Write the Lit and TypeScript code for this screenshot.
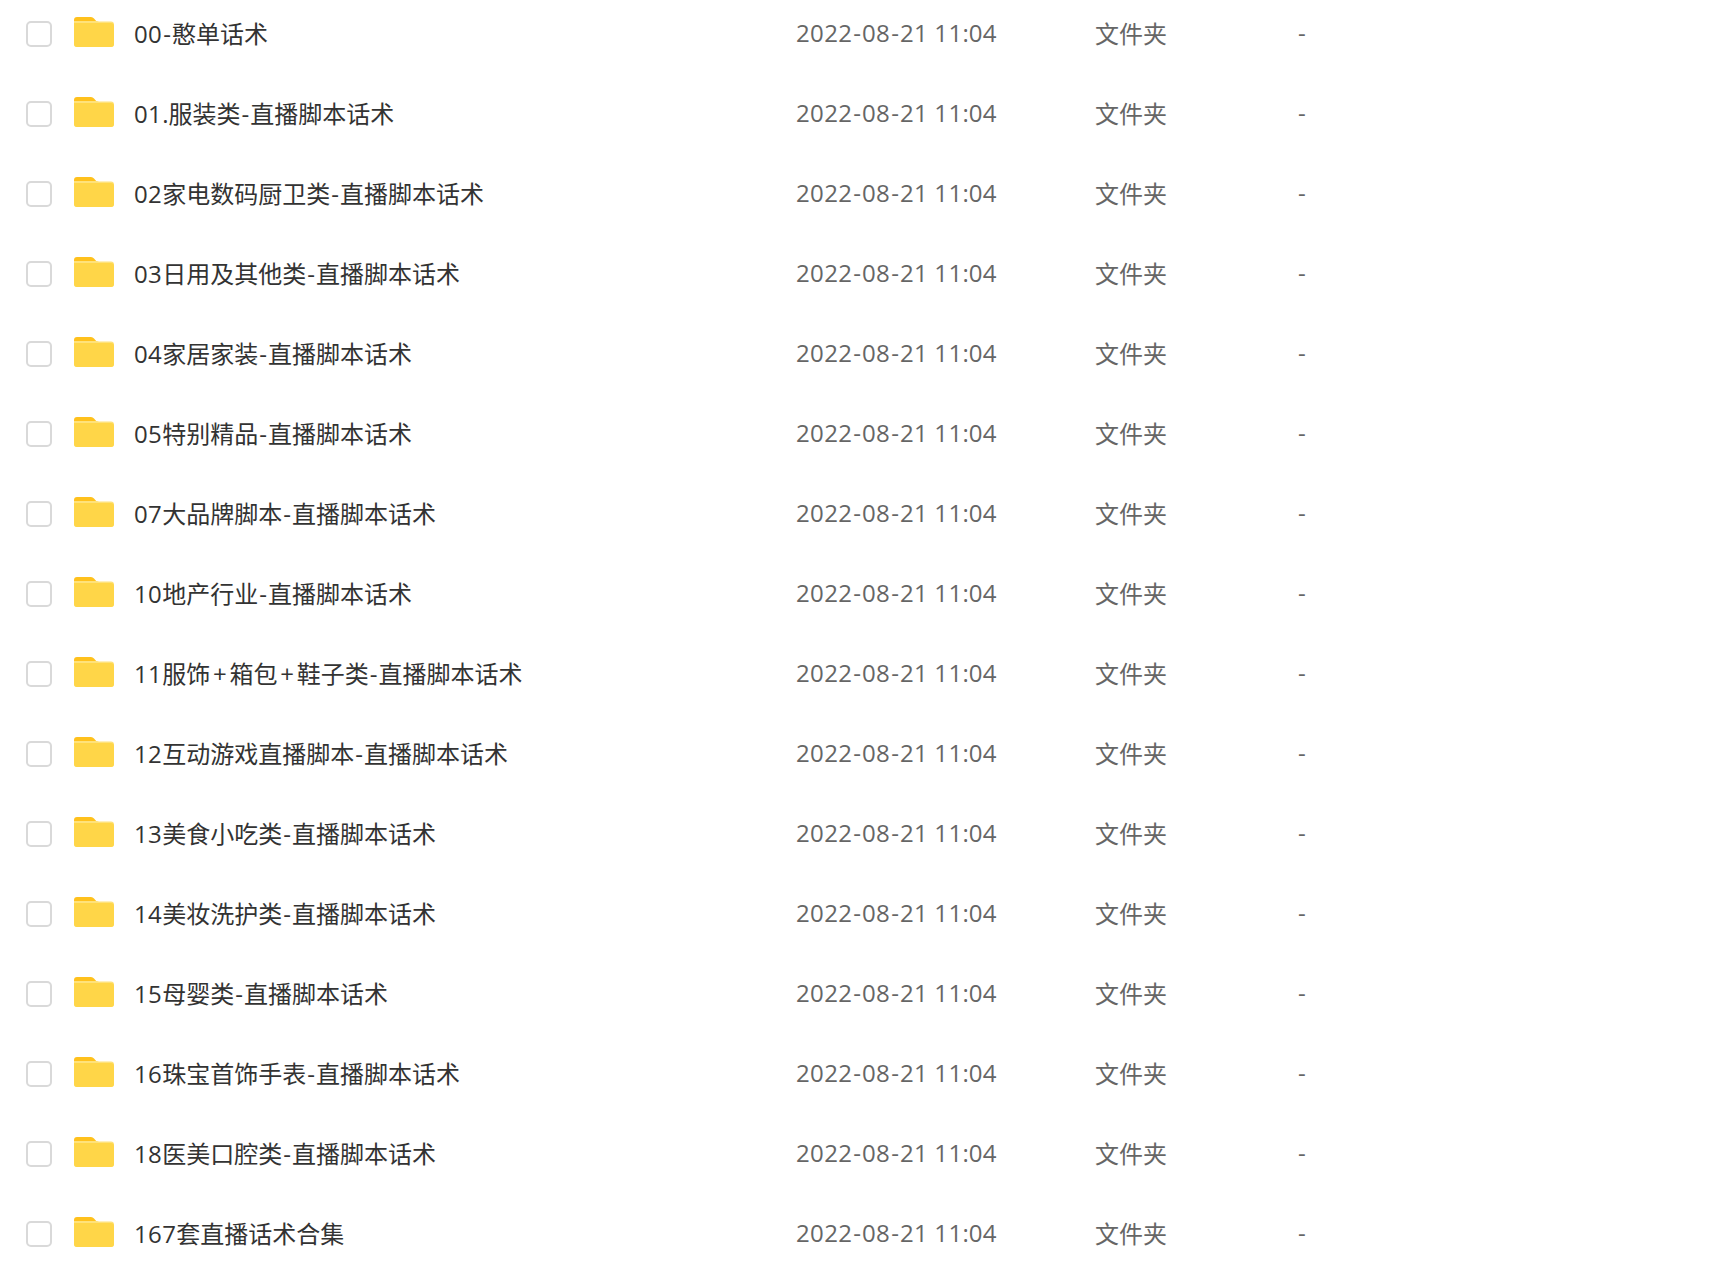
import { LitElement, html, css } from "lit";
import { customElement } from "lit/decorators.js";

const NAMES = [
  "00-憨单话术",
  "01.服装类-直播脚本话术",
  "02家电数码厨卫类-直播脚本话术",
  "03日用及其他类-直播脚本话术",
  "04家居家装-直播脚本话术",
  "05特别精品-直播脚本话术",
  "07大品牌脚本-直播脚本话术",
  "10地产行业-直播脚本话术",
  "11服饰+箱包+鞋子类-直播脚本话术",
  "12互动游戏直播脚本-直播脚本话术",
  "13美食小吃类-直播脚本话术",
  "14美妆洗护类-直播脚本话术",
  "15母婴类-直播脚本话术",
  "16珠宝首饰手表-直播脚本话术",
  "18医美口腔类-直播脚本话术",
  "167套直播话术合集",
];

/** Split a label into runs, so digits and symbols get the reference's wider metrics. */
function runs(text: string) {
  return text.match(/[0-9]+|[-+.:]|\s+|[^0-9\-+.:\s]+/g)!.map((t) => {
    if (/^[0-9]/.test(t)) return html`<span class="dg">${t}</span>`;
    if (t === "-") return html`<span class="hy">${t}</span>`;
    if (t === "+") return html`<span class="pl">${t}</span>`;
    return t;
  });
}

@customElement("app-root")
export class AppRoot extends LitElement {
  static styles = css`
    :host {
      display: block;
      background: #fff;
      min-height: 1277px;
      overflow: hidden;
      font-family: "Open Sans", "Noto Sans CJK SC", sans-serif;
      font-size: 24px;
    }
    .list {
      display: flex;
      flex-direction: column;
      margin-top: -6px;
    }
    .row {
      display: flex;
      align-items: center;
      height: 80px;
      padding-left: 26px;
    }
    .check {
      width: 26px;
      height: 26px;
      box-sizing: border-box;
      border: 2px solid #d9d9d9;
      border-radius: 5px;
      background: #fff;
      flex: none;
    }
    .icon {
      width: 40px;
      height: 30px;
      margin-left: 22px;
      margin-right: 1px;
      margin-top: -4px;
      flex: none;
      display: block;
    }
    .name {
      width: 662px;
      margin-left: 19px;
      margin-bottom: 4px;
      flex: none;
      color: #333;
      white-space: pre;
    }
    .date {
      width: 299px;
      margin-bottom: 3px;
      flex: none;
      color: #666;
      white-space: pre;
    }
    .type {
      width: 203px;
      margin-bottom: 3px;
      flex: none;
      color: #666;
    }
    .size {
      margin-bottom: 3px;
      color: #666;
    }
    .dg {
      letter-spacing: 0.35px;
    }
    .hy {
      padding: 0 1px;
    }
    .pl {
      padding: 0 2.8px;
    }
  `;

  render() {
    return html`<div class="list">
      ${NAMES.map(
        (n) => html`<div class="row">
          <span class="check"></span>
          <svg class="icon" viewBox="0 0 40 30">
            <path d="M0 3a3 3 0 0 1 3-3h14a4 4 0 0 1 3 1.5L23 5H0z" fill="#ffc11c" />
            <path d="M0 4h23l2 0.5h12a3 3 0 0 1 3 3V27a3 3 0 0 1-3 3H3a3 3 0 0 1-3-3z" fill="#ffe27a" />
            <path d="M0 6h37a3 3 0 0 1 3 3V27a3 3 0 0 1-3 3H3a3 3 0 0 1-3-3z" fill="#ffd648" />
          </svg>
          <span class="name">${runs(n)}</span>
          <span class="date">${runs("2022-08-21 11:04")}</span>
          <span class="type">文件夹</span>
          <span class="size">-</span>
        </div>`
      )}
    </div>`;
  }
}
